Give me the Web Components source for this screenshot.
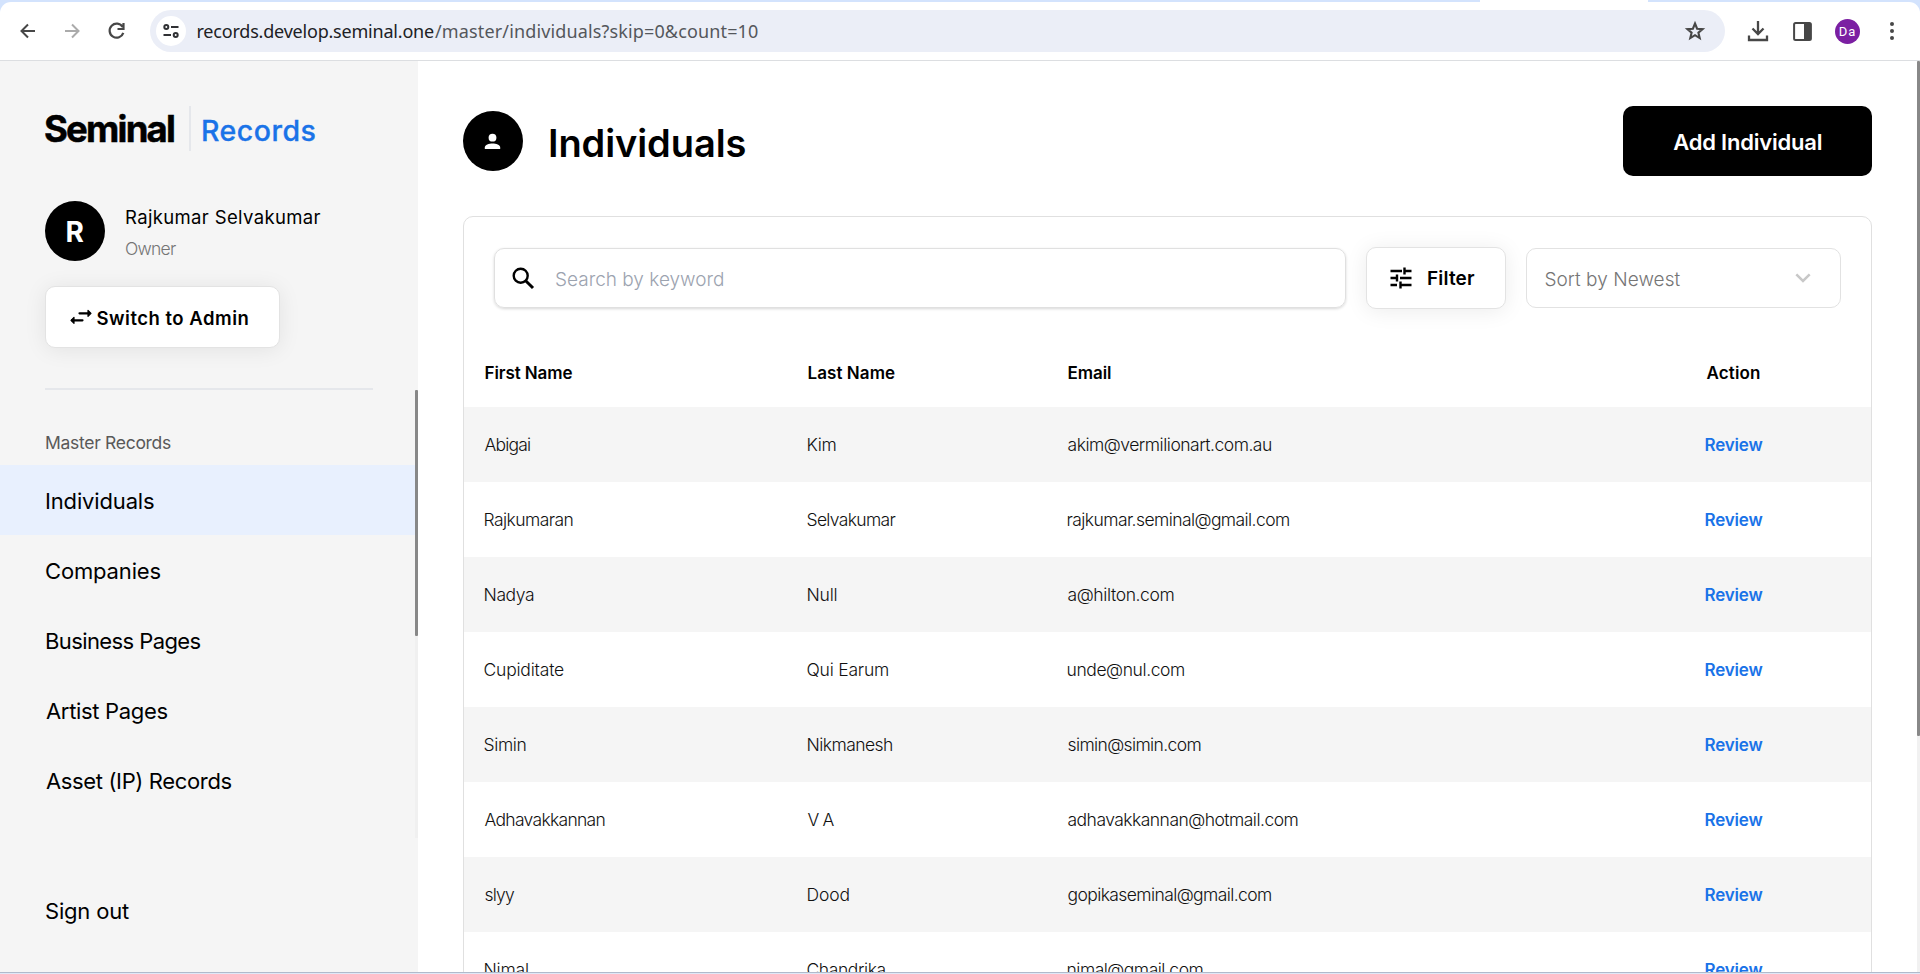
<!DOCTYPE html>
<html lang="en">
<head>
<meta charset="utf-8">
<title>Seminal Records</title>
<style>
html,body{margin:0;height:100%;overflow:hidden;background:#fff;font-family:Inter,"Liberation Sans",sans-serif;color:#000}
</style>
</head>
<body>
<records-app></records-app>
<script>
const define = (name, html, setup) => {
  const t = document.createElement('template');
  t.innerHTML = html;
  customElements.define(name, class extends HTMLElement {
    connectedCallback() {
      if (this.shadowRoot) return;
      const root = this.attachShadow({mode: 'open'});
      root.append(t.content.cloneNode(true));
      if (setup) setup(this, root);
    }
  });
};

// A label tracked so that its glyphs fill the width given in "w".
const ctx = document.createElement('canvas').getContext('2d');
define('ui-label', `<style>
:host{display:block;flex:none;white-space:pre}
span{display:block;white-space:pre}
</style><span><slot></slot></span>`, (el, root) => {
  const w = parseFloat(el.getAttribute('w'));
  const s = getComputedStyle(el);
  const text = el.textContent;
  ctx.font = `${s.fontWeight} ${s.fontSize} ${s.fontFamily}`;
  const m = ctx.measureText(text);
  const ink = m.actualBoundingBoxRight + m.actualBoundingBoxLeft;
  el.style.width = w + 'px';
  const span = root.querySelector('span');
  span.style.marginLeft = m.actualBoundingBoxLeft + 'px';
  if (text.length > 1) span.style.letterSpacing = (w - ink) / (text.length - 1) + 'px';
});

define('browser-bar', `<style>
:host{display:block;box-sizing:border-box;height:61px;padding-top:2px;border-bottom:1px solid #dcdee1;background:#d3e3fd;position:relative}
.tab{position:absolute;left:1480px;top:0;width:168px;height:2px;background:#fff}
.bar{box-sizing:border-box;height:58px;background:#fff;border-radius:11px 11px 0 0;display:flex;align-items:center;padding:0 0 0 18px}
svg{display:block;flex:none}
.nav{display:flex;gap:22px;width:132px}
.omni{box-sizing:border-box;width:1575px;height:42px;border-radius:21px;background:#ebeef7;display:flex;align-items:center;padding:0 18px 0 6px}
.site{width:30px;height:30px;border-radius:50%;background:#fff;display:grid;place-items:center;margin-right:11.500px}
.url{font:18px/42px "Noto Sans",sans-serif;color:#202124;display:flex;gap:1px;flex:1}
.path{color:#54575c}
.tools{display:flex;align-items:center;margin-left:22px}
.me{width:25px;height:25px;border-radius:50%;background:#7b1fa2;color:#fff;font:13px/25px Roboto,sans-serif;display:flex;justify-content:center;margin:0 20px 0 23px}
</style>
<div class="tab"></div>
<div class="bar">
 <div class="nav">
  <svg width="20" height="20" viewBox="0 0 20 20" fill="none" stroke="#474747" stroke-width="2"><path d="M17 10H4M10 3.500 3.500 10l6.500 6.500"/></svg>
  <svg width="24" height="20" viewBox="0 0 24 20" fill="none" stroke="#ababab" stroke-width="2"><path d="M5 10h13M12 3.500l6.500 6.500-6.500 6.500"/></svg>
  <svg width="22" height="20" viewBox="0 0 22 20" fill="none" stroke="#474747" stroke-width="2.200"><path d="M16.600 6A7 7 0 1 0 17.300 11.800M17.500 2v6h-6"/></svg>
 </div>
 <div class="omni">
  <div class="site"><svg width="18" height="16" viewBox="0 0 18 16" fill="none" stroke="#303134" stroke-width="2"><circle cx="4.300" cy="4" r="2"/><path d="M9 4h7.500M1.500 12H9"/><circle cx="13.700" cy="12" r="2"/></svg></div>
  <div class="url"><ui-label w="236.500">records.develop.seminal.one</ui-label><ui-label class="path" w="323">/master/individuals?skip=0&amp;count=10</ui-label></div>
  <svg width="24" height="24" viewBox="0 0 24 24" fill="none" stroke="#474747" stroke-width="2.100"><path d="M12 4.500l2.100 5.200 5.500.4-4.200 3.600 1.300 5.400-4.700-2.900-4.700 2.900 1.300-5.400-4.200-3.600 5.500-.4z"/></svg>
 </div>
 <div class="tools">
  <svg width="22" height="22" viewBox="0 0 22 22" fill="none" stroke="#474747" stroke-width="2.300"><path d="M11 1v12M5.500 8.500 11 14l5.500-5.500M2 15.500V20h18v-4.500"/></svg>
  <svg style="margin-left:24px" width="19" height="19" viewBox="0 0 19 19"><rect x="1.100" y="1.100" width="16.800" height="16.800" rx="1.500" fill="none" stroke="#474747" stroke-width="2"/><path d="M11 1h7v17h-7z" fill="#474747"/></svg>
  <div class="me"><ui-label w="15.500">Da</ui-label></div>
  <svg width="24" height="20" viewBox="0 0 24 20" fill="#474747"><circle cx="12" cy="3" r="2"/><circle cx="12" cy="10" r="2"/><circle cx="12" cy="17" r="2"/></svg>
 </div>
</div>`);

define('nav-item', `<style>
:host{display:flex;align-items:center;box-sizing:border-box;height:70px;padding:2px 0 0 46px;font-size:22px;font-weight:400;line-height:30px}
:host([active]){background:#e8f0fe}
</style><slot></slot>`);

define('soft-button', `<style>
:host{display:flex;align-items:center;box-sizing:border-box;height:62px;border:1px solid #e3e3e3;border-radius:10px;background:#fff;box-shadow:0 2px 22px rgba(0,0,0,.08);font-weight:600;line-height:26px}
</style><slot></slot>`);

define('side-bar', `<style>
:host{display:flex;flex-direction:column;width:418px;flex:none;background:#f5f5f5;box-sizing:border-box;padding-top:45px}
.brand,.user{display:flex;align-items:center;margin-left:45px}
.brand{height:45px}
.logo{font-size:36.500px;font-weight:700;line-height:45px;padding-top:2px;-webkit-text-stroke:.5px #000}
.line{width:2px;height:45px;background:#e5e7eb;margin:0 12px 0 15px}
.product{font-size:28.500px;font-weight:500;line-height:41px;padding-top:3px;color:#1a73e8;-webkit-text-stroke:.3px #1a73e8}
.user{margin-top:50px;height:60px;align-items:flex-start;gap:21px}
.avatar{width:60px;height:60px;box-sizing:border-box;border-radius:50%;background:#000;color:#fff;display:grid;place-items:center;font-size:28px;font-weight:700;line-height:34px;padding-top:2px}
.name{font-size:18.500px;line-height:32px}
.role{font-size:17.500px;line-height:31px;font-weight:300;color:#757575}
soft-button{margin:25px 0 0 45px;width:235px;font-size:18.500px;padding:1px 0 0 24px}
hr{border:0;height:2px;background:#e5e7eb;margin:40px 45px 0;width:328px;flex:none}
.scroll{height:448px;display:flex}
nav{flex:1}
.cap{font-size:17.500px;line-height:30px;padding:38px 0 7px 46px;color:#595959}
.track{width:3px;background:#f0f0f0}
.thumb{height:246px;background:#888;border-radius:1px}
.out{margin-top:37px}
svg{display:block;margin-right:4.500px}
</style>
<div class="brand"><ui-label class="logo" w="129">Seminal</ui-label><div class="line"></div><ui-label class="product" w="112.500">Records</ui-label></div>
<div class="user"><div class="avatar"><ui-label w="17">R</ui-label></div><div><ui-label class="name" w="194.500">Rajkumar Selvakumar</ui-label><ui-label class="role" w="50">Owner</ui-label></div></div>
<soft-button><svg width="22" height="18" viewBox="0 0 22 18" fill="none" stroke="#000" stroke-width="2.200" stroke-linecap="round" style="margin-top:-2px"><path d="M9.500 5.300H19M2 12.300h10.500"/><path d="M18 2.300l3 3-3 3zM4 9.300l-3 3 3 3z" fill="#000" stroke-width="1.200" stroke-linejoin="round"/></svg><ui-label w="152">Switch to Admin</ui-label></soft-button>
<hr>
<div class="scroll"><nav>
<div class="cap"><ui-label w="125">Master Records</ui-label></div>
<nav-item active><ui-label w="108">Individuals</ui-label></nav-item>
<nav-item><ui-label w="114.500">Companies</ui-label></nav-item>
<nav-item><ui-label w="154.500">Business Pages</ui-label></nav-item>
<nav-item><ui-label w="121.500">Artist Pages</ui-label></nav-item>
<nav-item><ui-label w="185.500">Asset (IP) Records</ui-label></nav-item>
</nav><div class="track"><div class="thumb"></div></div></div>
<nav-item class="out"><ui-label w="83">Sign out</ui-label></nav-item>`);

define('page-head', `<style>
:host{display:flex;height:70px;align-items:center}
.ic{width:60px;height:60px;border-radius:50%;background:#000;display:grid;place-items:center;margin:0 27px 0 0}
.title{flex:1;font-size:38px;font-weight:600;line-height:50px;padding-top:4px}
.add{width:249px;height:70px;border-radius:10px;background:#000;color:#fff;font-size:22px;font-weight:600;line-height:72px;display:flex;justify-content:center}
</style>
<div class="ic"><svg width="17" height="17" viewBox="0 0 17 17" fill="#fff" style="margin-left:-1px"><circle cx="8.500" cy="4.700" r="3.900"/><path d="M.8 16v-1.400C.8 11.800 5 10.600 8.500 10.600s7.700 1.200 7.700 4V16z"/></svg></div>
<div class="title"><ui-label w="195.500">Individuals</ui-label></div>
<div class="add"><ui-label w="148.500">Add Individual</ui-label></div>`);

define('tool-row', `<style>
:host{display:flex;height:62px;align-items:center;padding:0 30px 0 30px}
.search{flex:1;height:60px;box-sizing:border-box;border:1px solid #e0e0e0;border-radius:10px;box-shadow:0 1px 3px rgba(0,0,0,.16);display:flex;align-items:center;padding-left:16px;font-size:19px;font-weight:300;color:#9ca3af}
.search ui-label{margin-left:21px;padding-top:2px}
soft-button{width:140px;margin:0 20px;font-size:19px;padding-left:22px}
soft-button ui-label{padding-top:2px}
.sort{width:315px;height:60px;box-sizing:border-box;border:1px solid #e2e2e2;border-radius:10px;display:flex;align-items:center;justify-content:space-between;padding:0 29px 0 18.500px;font-size:19px;font-weight:300;color:#757575}
.sort ui-label{padding-top:2px}
svg{display:block;flex:none}
</style>
<div class="search"><svg width="24" height="24" viewBox="0 0 24 24" fill="none" stroke="#000" stroke-width="2.400" style="margin-top:-1px"><circle cx="9.700" cy="9.700" r="7"/><path d="M14.700 14.700l7.300 7.300" stroke-width="3"/></svg><ui-label w="167">Search by keyword</ui-label></div>
<soft-button><svg width="24" height="24" viewBox="0 0 24 24" fill="none" stroke="#000" stroke-width="2.400" style="margin-right:15px"><path d="M1.500 5h11.500M15.500 5H22.500M15.500 1.500v7M1.500 12H8M8 8.500v7M11 12h11.500M1.500 19H8M11.500 15.500v7M11.500 19h11"/></svg><ui-label w="47">Filter</ui-label></soft-button>
<div class="sort"><ui-label w="135">Sort by Newest</ui-label><svg width="16" height="10" viewBox="0 0 16 10" fill="none" stroke="#c8c8c8" stroke-width="2.500"><path d="M1.300 1.300 8 8l6.700-6.700"/></svg></div>`);

const people = [
 ['Abigai',45.5,'Kim',28,'akim@vermilionart.com.au',203.5],
 ['Rajkumaran',88,'Selvakumar',88,'rajkumar.seminal@gmail.com',221.5],
 ['Nadya',49.5,'Null',29,'a@hilton.com',106],
 ['Cupiditate',79.5,'Qui Earum',80.5,'unde@nul.com',116.5],
 ['Simin',41,'Nikmanesh',84.5,'simin@simin.com',133],
 ['Adhavakkannan',120,'V A',27,'adhavakkannan@hotmail.com',230],
 ['slyy',30.5,'Dood',42,'gopikaseminal@gmail.com',203.5],
 ['Nimal',43.5,'Chandrika',78,'nimal@gmail.com',135]
];
define('record-table', `<style>
:host{display:block}
.head,.row{display:grid;grid-template-columns:323px 260px 638px 1fr;align-items:center;box-sizing:border-box;height:75px;padding-left:20.500px;font-size:17.500px;line-height:24px}
.head{height:68px;font-size:17px;font-weight:600;padding-left:21.500px}
.row{font-weight:300;color:#111}
.row:nth-of-type(even){background:#f5f5f5}
.go{color:#1a73e8;font-weight:600;font-size:17px}
</style>
<div class="head"><ui-label w="87">First Name</ui-label><ui-label w="86.500">Last Name</ui-label><ui-label w="42.500">Email</ui-label><ui-label w="53.500">Action</ui-label></div>`, (el, root) => {
  for (const p of people) {
    const row = document.createElement('div');
    row.className = 'row';
    row.innerHTML = [0, 2, 4].map(i => `<ui-label w="${p[i + 1]}">${p[i]}</ui-label>`).join('') + '<ui-label class="go" w="57">Review</ui-label>';
    root.append(row);
  }
});

define('content-card', `<style>
:host{display:block;box-sizing:border-box;border:1px solid #e0e0e0;border-radius:10px;padding-top:30px;height:900px}
record-table{margin-top:30px}
</style><tool-row></tool-row><record-table></record-table>`);

define('records-app', `<style>
:host{display:flex;flex-direction:column;height:974px;width:1920px;overflow:hidden}
.page{display:flex;height:911px;overflow:hidden}
main{flex:1;padding:45px 45px 0}
content-card{margin-top:40px}
.track{width:3px;background:#f1f1f1}
.thumb{height:675px;background:#888;border-radius:1px}
.edge{height:1px;background:#dfe8f7;border-top:1px solid #b0bacb}
</style>
<browser-bar></browser-bar>
<div class="page"><side-bar></side-bar><main><page-head></page-head><content-card></content-card></main><div class="track"><div class="thumb"></div></div></div>
<div class="edge"></div>`);
</script>
</body>
</html>
